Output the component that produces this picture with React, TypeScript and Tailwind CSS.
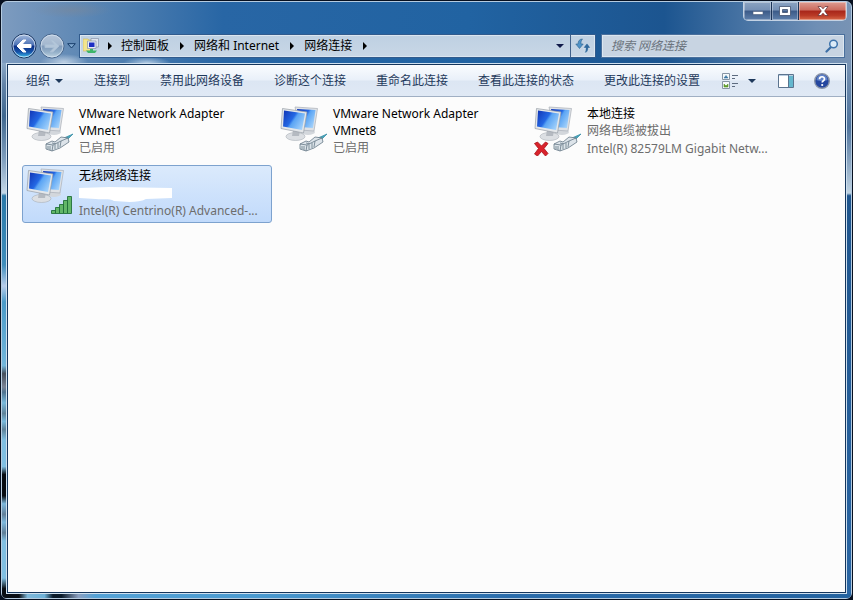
import type { ReactNode } from 'react';

interface Connection {
  name: string;
  status?: string;
  device?: string;
  kind: 'cable' | 'unplugged' | 'wireless';
  selected?: boolean;
}

const crumbs = ['控制面板', '网络和 Internet', '网络连接'];

const commands = ['连接到', '禁用此网络设备', '诊断这个连接', '重命名此连接', '查看此连接的状态', '更改此连接的设置'];

const connections: Connection[] = [
  { name: 'VMware Network Adapter VMnet1', status: '已启用', kind: 'cable' },
  { name: 'VMware Network Adapter VMnet8', status: '已启用', kind: 'cable' },
  { name: '本地连接', status: '网络电缆被拔出', device: 'Intel(R) 82579LM Gigabit Netw...', kind: 'unplugged' },
  { name: '无线网络连接', device: 'Intel(R) Centrino(R) Advanced-...', kind: 'wireless', selected: true },
];

function Arrow({ down = false }: { down?: boolean }) {
  return down ? (
    <svg className="h-1 w-2 shrink-0" viewBox="0 0 8 4" aria-hidden="true">
      <path d="M0 0h8L4 4z" fill="currentColor" />
    </svg>
  ) : (
    <svg className="h-2 w-1 shrink-0" viewBox="0 0 4 8" aria-hidden="true">
      <path d="M0 0v8l4-4z" fill="currentColor" />
    </svg>
  );
}

function NavButton({ label, back = false }: { label: string; back?: boolean }) {
  const id = back ? 'nav-back' : 'nav-forward';
  return (
    <button type="button" aria-label={label} className="h-[26px] w-[26px] shrink-0">
      <svg viewBox="0 0 26 26" className="h-full w-full">
        <defs>
          <linearGradient id={id} x1="0" y1="0" x2="0" y2="1">
            <stop offset="0" stopColor={back ? '#a9bfe0' : '#b6c6da'} />
            <stop offset=".46" stopColor={back ? '#4a70b4' : '#a3b7ce'} />
            <stop offset=".5" stopColor={back ? '#0c2f86' : '#7f9aba'} />
            <stop offset=".75" stopColor={back ? '#1552a8' : '#93afc8'} />
            <stop offset="1" stopColor={back ? '#3fc8f4' : '#c4d6e4'} />
          </linearGradient>
        </defs>
        <circle cx="13" cy="13" r="12" fill={`url(#${id})`} stroke={back ? '#1c3760' : '#48678e'} />
        <circle cx="13" cy="13" r="11" fill="none" stroke="#e3eefa" strokeOpacity={back ? 0.75 : 0.6} />
        {back ? (
          <path d="M6 13l6-6h3l-4 4.5h9v3h-9l4 4.5h-3z" fill="#fff" stroke="#fff" strokeLinejoin="round" />
        ) : (
          <path d="M20 13l-6-6h-3l4 4.5H6v3h9l-4 4.5h3z" fill="#b3c6d9" stroke="#a9bed4" strokeLinejoin="round" />
        )}
      </svg>
    </button>
  );
}

function CaptionButton({ label, className, children }: { label: string; className: string; children: ReactNode }) {
  return (
    <button
      type="button"
      aria-label={label}
      className={`flex h-[18px] items-center justify-center shadow-[inset_0_0_0_1px_rgba(255,255,255,0.35)] ${className}`}
    >
      {children}
    </button>
  );
}

const GLASS = 'bg-[linear-gradient(#8ba3c2,#7590b5_45%,#3b5a88_50%,#5f80ab)]';

function TitleBar() {
  return (
    <div className="flex h-[31px] justify-end">
      <div className="mr-1 flex h-[19px] overflow-hidden rounded-b-[5px] border border-t-0 border-[#c3d2e4]">
        <CaptionButton label="最小化" className={`w-[28px] border-r border-[#1c3458] ${GLASS}`}>
          <svg className="mt-1 h-1 w-3" viewBox="0 0 12 4">
            <path d="M1 .5h10v3H1z" fill="#fff" stroke="#4a5a78" strokeWidth=".6" />
          </svg>
        </CaptionButton>
        <CaptionButton label="最大化" className={`w-[27px] border-r border-[#1c3458] ${GLASS}`}>
          <svg className="h-[10px] w-3" viewBox="0 0 12 10">
            <path d="M.5.5h11v9H.5zM3.5 3.5v3h5v-3z" fill="#fff" fillRule="evenodd" stroke="#42526f" strokeWidth=".8" />
          </svg>
        </CaptionButton>
        <CaptionButton label="关闭" className="w-[47px] bg-[linear-gradient(#dd9c92,#cb6a5d_45%,#a8261a_50%,#b93a26_75%,#d8694a)]">
          <svg className="h-[10px] w-3" viewBox="0 0 12 10">
            <path d="M1 .5h3l2 2.3L8 .5h3L7.7 5 11 9.5H8L6 7.2 4 9.5H1L4.3 5z" fill="#fff" stroke="#5e2a2f" strokeWidth=".7" />
          </svg>
        </CaptionButton>
      </div>
    </div>
  );
}

function LocationIcon() {
  return (
    <svg className="h-4 w-4 shrink-0" viewBox="0 0 16 16" aria-hidden="true">
      <path d="M0 1h5l1 1h3v11H0z" fill="#f3e58d" stroke="#cdb659" strokeWidth=".6" />
      <path d="M8 .5h7.500V9H8z" fill="#dfe5ee" stroke="#8794aa" strokeWidth=".7" />
      <path d="M4.500 3h8.500v7.500H4.500z" fill="#e8edf5" stroke="#8794aa" strokeWidth=".7" />
      <path d="M6 4.500h5.500V9H6z" fill="#1d2ec4" />
      <path d="M7 11h3v1.500h4L12 15H5l-2-2.500h4z" fill="#3db56a" />
    </svg>
  );
}

function AddressBar() {
  return (
    <div className="flex h-6 min-w-0 flex-1 items-stretch border border-[#315b8d] bg-[linear-gradient(#bed0e2,#c9d7e6)] shadow-[inset_0_0_0_1px_#dbe6f0]">
      <nav aria-label="地址" className="flex min-w-0 flex-1 items-center pl-[3px]">
        <LocationIcon />
        <ol className="flex items-center">
          <li className="flex w-[22px] justify-center">
            <Arrow />
          </li>
          {crumbs.map((crumb) => (
            <li key={crumb} className="flex items-center whitespace-nowrap">
              <a href="#" className="text-black">
                {crumb}
              </a>
              <span className="flex w-[25px] justify-center">
                <Arrow />
              </span>
            </li>
          ))}
        </ol>
      </nav>
      <button type="button" aria-label="以前的位置" className="flex w-5 items-center justify-center text-[#101a4a]">
        <Arrow down />
      </button>
      <button type="button" aria-label="刷新" className="flex w-[25px] items-center justify-center border-l border-[#41618b]">
        <svg className="h-4 w-4" viewBox="0 0 16 16">
          <path d="M7.500 1C4.500 1 3 3 3 6H.8l3.700 4.500L8.200 6H6c0-2 0-3.500 1.500-5z" fill="#4f93c8" stroke="#2c638f" strokeWidth=".6" />
          <path d="M9 15c3 0 4.500-2 4.500-5h2.300L12 5 8 10h2.500c0 2 0 3.500-1.500 5z" fill="#326b9f" stroke="#f0f6fa" strokeWidth=".5" />
        </svg>
      </button>
    </div>
  );
}

function SearchBox() {
  return (
    <div className="ml-[3px] flex h-6 w-[244px] items-center border border-[#4a6f9c] bg-[#c8d4e2] pr-[5px] shadow-[inset_0_0_0_1px_#dbe6f0]">
      <input
        type="search"
        aria-label="搜索 网络连接"
        placeholder="搜索 网络连接"
        className="min-w-0 flex-1 bg-transparent pl-[9px] italic outline-none placeholder:text-[#6c747e]"
      />
      <svg className="h-[14px] w-[14px] shrink-0" viewBox="0 0 14 14" aria-hidden="true">
        <path d="M1.500 12.500L6 8" stroke="#3b6ea5" strokeWidth="2.200" strokeLinecap="round" />
        <circle cx="8.500" cy="5" r="3.800" fill="#dcebf8" stroke="#3f74ac" strokeWidth="1.500" />
      </svg>
    </div>
  );
}

function CommandBar() {
  return (
    <div
      role="toolbar"
      aria-label="命令"
      className="flex h-8 items-center border-b border-[#a0afc3] bg-[linear-gradient(#fafcfe,#e9f0f9_48%,#dce6f3_52%,#e0e9f5)] pr-[15px] text-[#1e395b]"
    >
      <button type="button" className="ml-[18px] mr-[31px] flex items-center gap-[5px] whitespace-nowrap">
        组织
        <Arrow down />
      </button>
      <div className="flex gap-[30px]">
        {commands.map((command) => (
          <button key={command} type="button" className="whitespace-nowrap">
            {command}
          </button>
        ))}
      </div>
      <div className="ml-auto flex items-center">
        <button type="button" aria-label="更改视图" className="flex items-center gap-[9px]">
          <svg className="h-4 w-[17px]" viewBox="0 0 17 16">
            <path d="M.5.5h7v6h-7zM.5 8.500h7v7h-7z" fill="#f6fafc" stroke="#8795a5" />
            <path d="M2 5l2-2.500L6 5z" fill="#3977a5" stroke="#3977a5" strokeWidth=".6" />
            <path d="M2 14v-3l2 2 2-2v3z" fill="#5e9a2c" stroke="#5e9a2c" strokeWidth=".6" />
            <path d="M10 2.500h6M10 5.500h3M10 10.500h6M10 13.500h3" stroke="#5d6c80" />
          </svg>
          <Arrow down />
        </button>
        <button type="button" aria-label="显示预览窗格" className="ml-[22px]">
          <svg className="block h-[14px] w-4" viewBox="0 0 16 14">
            <path d="M.5.5h15v13H.5z" fill="#fff" stroke="#5b748f" />
            <path d="M1 1h14v1H1z" fill="#b9cde0" />
            <path d="M11 2h4v11h-4z" fill="#64b7ce" />
            <path d="M10.500 1v12" stroke="#5b748f" />
          </svg>
        </button>
        <button type="button" aria-label="获取帮助" className="ml-5">
          <svg className="block h-4 w-4" viewBox="0 0 16 16">
            <circle cx="8" cy="8" r="7.300" fill="#25479f" stroke="#8994a8" strokeWidth="1.400" />
            <path d="M2.500 7a5.500 5.500 0 0111 0c-3 1.500-8 1.500-11 0z" fill="#5f82c8" />
            <path d="M5.500 6.200C5.600 3 10.500 3 10.500 6c0 1.700-2.300 1.800-2.300 3.500" fill="none" stroke="#fff" strokeWidth="1.700" />
            <circle cx="8.200" cy="12" r="1.100" fill="#fff" />
          </svg>
        </button>
      </div>
    </div>
  );
}

function ConnectionIcon({ kind, id }: { kind: Connection['kind']; id: string }) {
  return (
    <svg className="h-[52px] w-12 shrink-0" viewBox="0 0 48 52" aria-hidden="true">
      <defs>
        <linearGradient id={id} x1="0" y1=".1" x2="1" y2=".7">
          <stop offset="0" stopColor="#1238b8" />
          <stop offset=".45" stopColor="#2468e4" />
          <stop offset=".55" stopColor="#5aa4f4" />
          <stop offset="1" stopColor="#a4d2fb" />
        </linearGradient>
      </defs>
      {/* rear monitor */}
      <ellipse cx="28" cy="28" rx="7" ry="3" fill="#d3d7dc" />
      <path d="M15 3l22.500 1.500L34 27l-14-1z" fill="#dfe2e6" stroke="#a9afb7" strokeWidth=".7" />
      <path d="M17 5l18.500 1L33 24l-13-1z" fill={`url(#${id})`} />
      {/* front monitor */}
      <ellipse cx="15.500" cy="32.500" rx="9.500" ry="4" fill="#dcdfe3" stroke="#aab0b7" strokeWidth=".6" />
      <path d="M13 26h7l-1 6h-7z" fill="#b5bac1" />
      <path d="M2.500 4.500L27 8l-3.500 21L1 24.500z" fill="#e4e7ea" stroke="#969da6" strokeWidth=".7" />
      <path d="M4 6.500L25 9.500 22 26 3 22.500z" fill={`url(#${id})`} />
      {kind === 'wireless' ? (
        <path
          d="M25.500 44.500h4v3h-4zM29.500 41.500h4v6h-4zM33.500 38.500h4v9h-4zM37.500 34.500h4v13h-4zM41.500 30.500h4v17h-4z"
          fill="#62b768"
          stroke="#23703a"
          strokeWidth=".9"
        />
      ) : (
        <g strokeLinejoin="round" strokeWidth=".8">
          <path d="M38 34l9-4-7 7z" fill="#47a6b9" stroke="#3a8fa8" />
          <path d="M20 40l6-3 3 1 6-5 7 1 1 4-9 6-8 3-6-2z" fill="#dde4ea" stroke="#667887" />
          <path d="M20 40l7 1-1 6M27 41l8-4 7-3M35 37l-1 6M22 42v3M24 42v4M29 41v4M32 39v5M26 39l4 1" fill="none" stroke="#667887" />
        </g>
      )}
      {kind === 'unplugged' && (
        <path
          d="M.5 39.500l3-1.500 4 4 4-4 2.500 1.500-4 5 4 5-2.500 2.500-4-4.500-4 4.500-3-2 4-5.500z"
          fill="#d9232c"
          stroke="#a80f18"
          strokeWidth=".8"
        />
      )}
    </svg>
  );
}

function ConnectionTile({ connection, index }: { connection: Connection; index: number }) {
  const { name, status, device, kind, selected } = connection;
  return (
    <li
      className={`flex h-[58px] gap-[5px] rounded-[3px] border pl-[3px] ${
        selected ? 'border-[#7da2ce] bg-[linear-gradient(#dbeafc,#c1dafb)]' : 'border-transparent'
      }`}
    >
      <ConnectionIcon kind={kind} id={`screen-${index}`} />
      <div className="min-w-0 flex-1 pt-px leading-[18px] text-[#6d6d6d]">
        <p className="pr-6 leading-[17px] text-black">{name}</p>
        {status && <p>{status}</p>}
        {kind === 'wireless' && (
          <svg className="block h-[18px] w-[93px]" viewBox="0 0 93 18" aria-hidden="true">
            <path d="M0 4l30-1 63 1v10l-26 1c-8 4-20 3-32 2-5-3-12-1-18-2L0 14z" fill="#fff" />
          </svg>
        )}
        {device && <p className="whitespace-nowrap">{device}</p>}
      </div>
    </li>
  );
}

export default function App() {
  return (
    <div className="flex min-h-screen flex-col bg-[#071020] p-px font-['Noto_Sans','Noto_Sans_CJK_SC',sans-serif] text-[12px]">
      <div className="flex flex-1 flex-col rounded-[6px] border border-[#b5cbe0] bg-[radial-gradient(40px_8px_at_70px_8px,rgba(125,135,150,0.5),transparent),radial-gradient(24px_8px_at_62px_60px,rgba(225,235,245,0.7),transparent),radial-gradient(24px_6px_at_145px_61px,rgba(225,238,250,0.7),transparent),linear-gradient(90deg,#7d9bbf,#5683b2_12%,#2866a5_26%,#2163a2_55%,#1c5590_78%,#6f8fb5_96%,#7893b4)]">
        <TitleBar />
        <div className="flex items-center gap-[2px] pb-1 pl-[9px] pr-[6px]">
          <div className="flex items-center">
            <NavButton label="后退" back />
            <span className="w-[2px]" />
            <NavButton label="前进" />
            <button type="button" aria-label="最近的页面" className="flex w-3 justify-center">
              <svg className="h-[6px] w-[9px]" viewBox="0 0 9 6">
                <path d="M.7.7h7.600L4.500 5z" fill="#7fa8cf" stroke="#163c69" />
              </svg>
            </button>
          </div>
          <AddressBar />
          <SearchBox />
        </div>
        <div className="flex flex-1">
          <div className="w-1 bg-[linear-gradient(#8ba9c8,#6484a8_4%,#3f678f_10%,#7d9dbd_18%,#c5d8e8_24.5%,#2a78a8_25%,#3f8dbb_38%,#b7cdec_42%,#4a9ac8_45%,#72b6db_57%,#46505e_58.5%,#7a8496_61%,#4f7390_62%,#78b9dc_64%,#5f8299_66%,#78b9dc_67.5%,#5f8299_69%,#7fbfe2_71%,#80bfe2_76%,#080c12_77.5%,#080c12_81.5%,#7cb8dd_83%,#627f99_85%,#7cb8dd_86.5%,#5f7d96_88.5%,#80bfe2_90%,#80bfe2_97%,#080c12_99%)]" />
          <div className="flex min-w-0 flex-1 flex-col border border-[#cfe0ef]">
            <div className="flex flex-1 flex-col border border-[#14355c] bg-[#fcfcfc]">
              <CommandBar />
              <main className="flex-1 pl-[14px] pt-[6px]">
                <ul className="grid grid-cols-[repeat(auto-fill,250px)] gap-1">
                  {connections.map((connection, index) => (
                    <ConnectionTile key={connection.name} connection={connection} index={index} />
                  ))}
                </ul>
              </main>
            </div>
          </div>
          <div className="w-1 bg-[linear-gradient(#7893b4,#4f739c_12%,#c0d3e2_24.5%,#1f558d_25%,#2a66a4)]" />
        </div>
        <div className="h-1 rounded-b-[5px] bg-[linear-gradient(90deg,#0a0f16_2%,#7fb8da_3%,#6db1d8_5%,#0a1a2a_6%,#0a1a2a_7%,#8a9fc0_9%,#54a2d6_11%,#4a9ad0_30%,#2a6cab_60%,#2463a0)]" />
      </div>
    </div>
  );
}
